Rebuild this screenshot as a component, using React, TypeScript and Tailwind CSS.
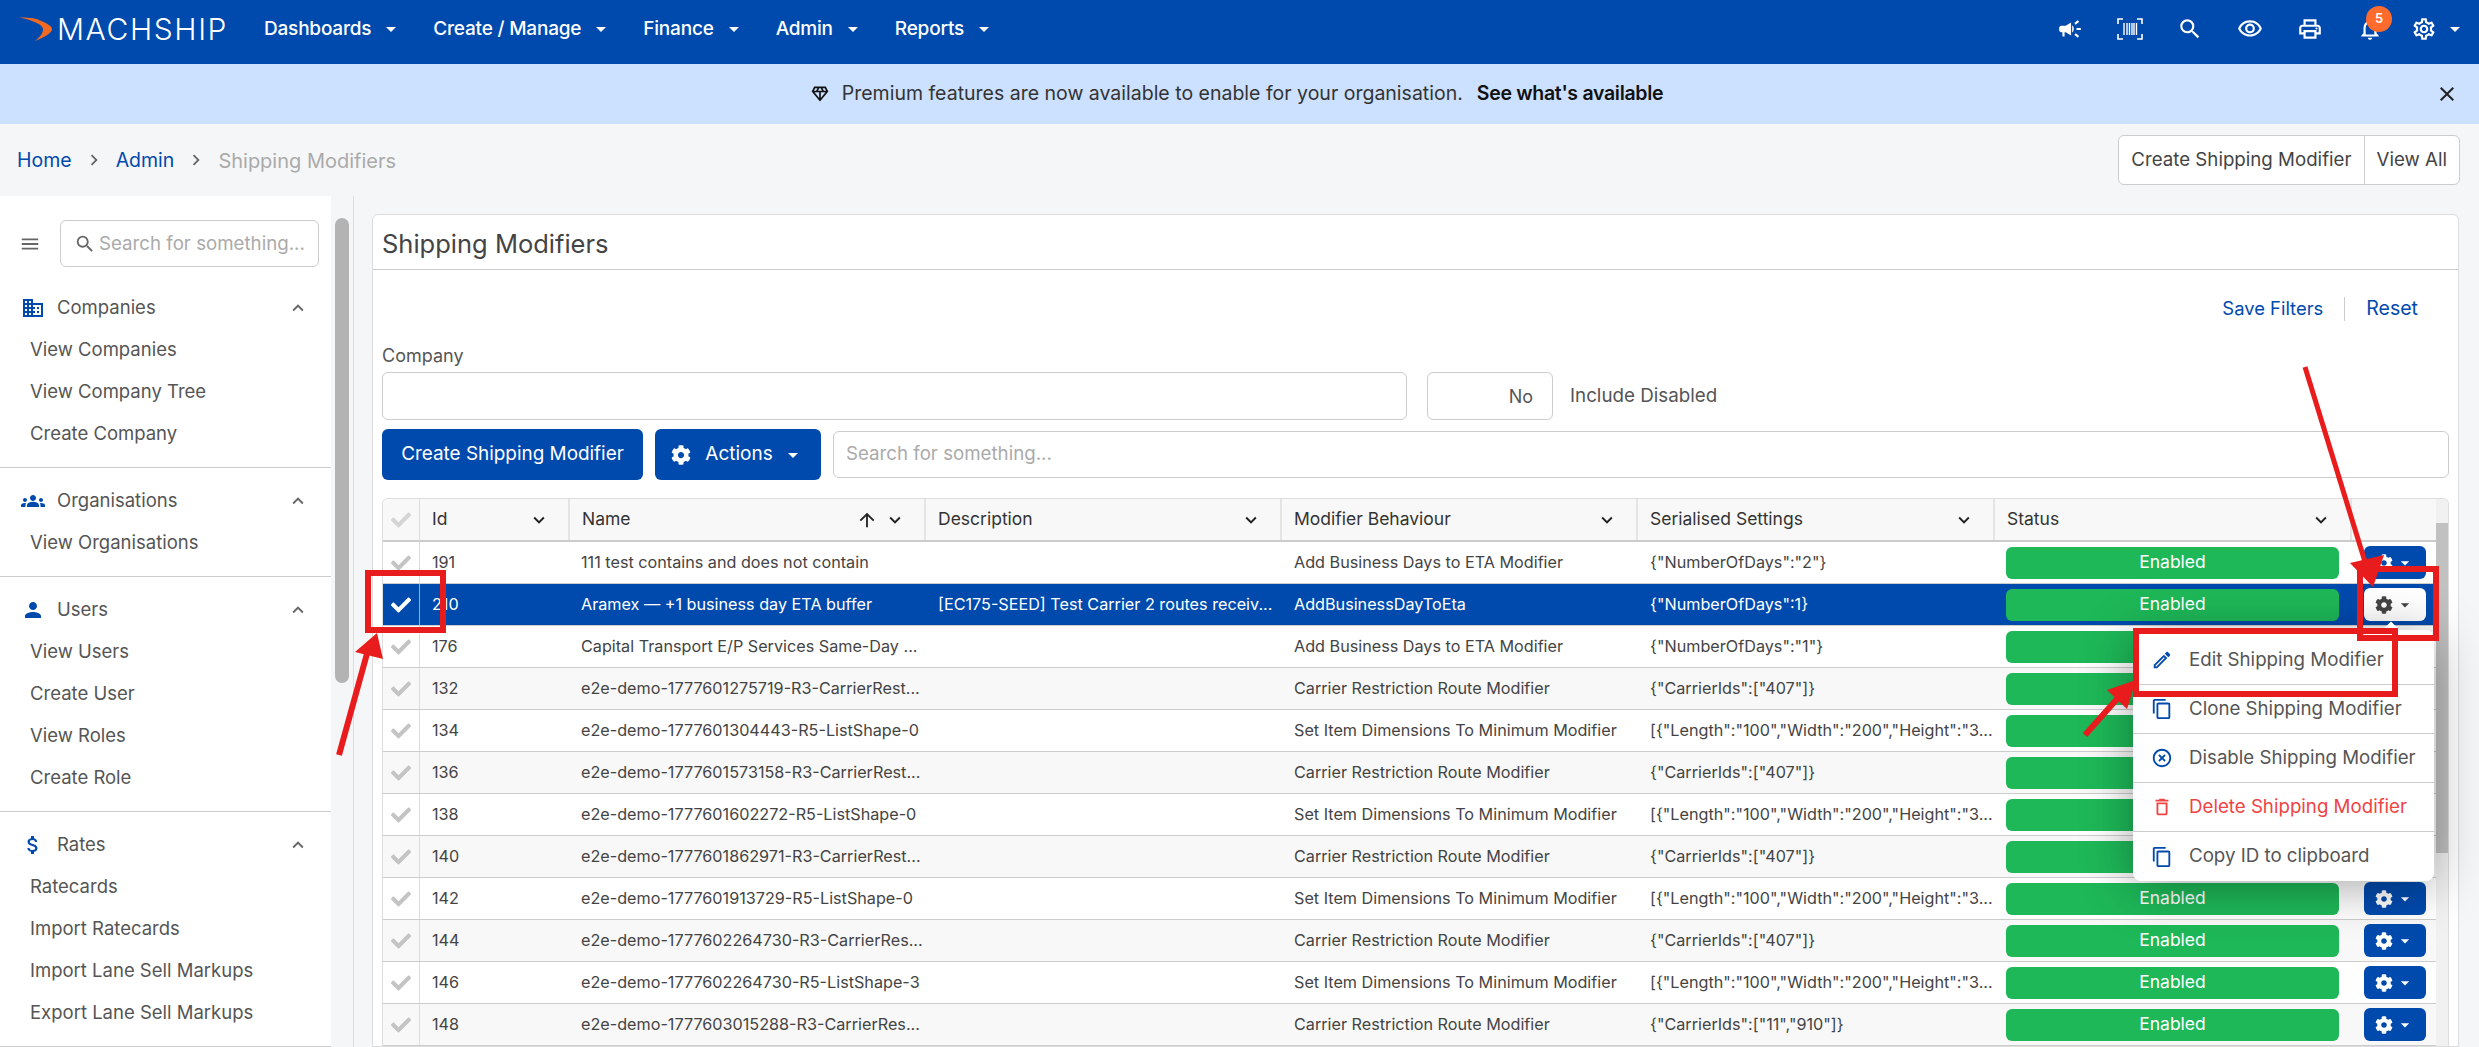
import React from 'react';
import { FaCheck, FaCog } from 'react-icons/fa';
import {
    MdArrowDropDown, MdArrowUpward, MdAttachMoney, MdCampaign, MdChevronRight, MdClose, MdDomain, MdExpandLess, MdExpandMore,
    MdGroups, MdHighlightOff, MdMenu, MdOutlineContentCopy, MdOutlineDelete, MdOutlineDiamond, MdOutlineEdit,
    MdOutlineNotifications, MdOutlinePrint, MdOutlineSettings, MdOutlineVisibility, MdPerson, MdSearch,
} from 'react-icons/md';

const navItems = ['Dashboards', 'Create / Manage', 'Finance', 'Admin', 'Reports'];

const sideGroups = [
    { title: 'Companies', icon: <MdDomain />, links: ['View Companies', 'View Company Tree', 'Create Company'] },
    { title: 'Organisations', icon: <MdGroups />, links: ['View Organisations'] },
    { title: 'Users', icon: <MdPerson />, links: ['View Users', 'Create User', 'View Roles', 'Create Role'] },
    { title: 'Rates', icon: <MdAttachMoney />, links: ['Ratecards', 'Import Ratecards', 'Import Lane Sell Markups', 'Export Lane Sell Markups'] },
];

const ETA = 'Add Business Days to ETA Modifier';
const CARRIER = 'Carrier Restriction Route Modifier';
const DIMS = 'Set Item Dimensions To Minimum Modifier';
const CARRIER_JSON = '{"CarrierIds":["407"]}';
const DIMS_JSON = '[{"Length":"100","Width":"200","Height":"3...';

const rows = [
    { id: '191', name: '111 test contains and does not contain', desc: '', mod: ETA, json: '{"NumberOfDays":"2"}' },
    { id: '210', name: 'Aramex — +1 business day ETA buffer', desc: '[EC175-SEED] Test Carrier 2 routes receiv...', mod: 'AddBusinessDayToEta', json: '{"NumberOfDays":1}', selected: true },
    { id: '176', name: 'Capital Transport E/P Services Same-Day ...', desc: '', mod: ETA, json: '{"NumberOfDays":"1"}' },
    { id: '132', name: 'e2e-demo-1777601275719-R3-CarrierRest...', desc: '', mod: CARRIER, json: CARRIER_JSON, alt: true },
    { id: '134', name: 'e2e-demo-1777601304443-R5-ListShape-0', desc: '', mod: DIMS, json: DIMS_JSON },
    { id: '136', name: 'e2e-demo-1777601573158-R3-CarrierRest...', desc: '', mod: CARRIER, json: CARRIER_JSON, alt: true },
    { id: '138', name: 'e2e-demo-1777601602272-R5-ListShape-0', desc: '', mod: DIMS, json: DIMS_JSON },
    { id: '140', name: 'e2e-demo-1777601862971-R3-CarrierRest...', desc: '', mod: CARRIER, json: CARRIER_JSON, alt: true },
    { id: '142', name: 'e2e-demo-1777601913729-R5-ListShape-0', desc: '', mod: DIMS, json: DIMS_JSON },
    { id: '144', name: 'e2e-demo-1777602264730-R3-CarrierRes...', desc: '', mod: CARRIER, json: CARRIER_JSON, alt: true },
    { id: '146', name: 'e2e-demo-1777602264730-R5-ListShape-3', desc: '', mod: DIMS, json: DIMS_JSON },
    { id: '148', name: 'e2e-demo-1777603015288-R3-CarrierRes...', desc: '', mod: CARRIER, json: '{"CarrierIds":["11","910"]}', alt: true },
];

const columns = 'grid grid-cols-[37px_150px_356px_356px_356px_357px_357px_87px]';

function Barcode() {
    return (
        <svg className="h-[22px] w-[26px]" viewBox="0 0 26 22" fill="none" stroke="currentColor" strokeWidth="1.6">
            <path d="M1 6V1h5M20 1h5v5M25 16v5h-5M6 21H1v-5" />
            <path d="M7 5v12M10 5v12M12.5 5v12M15 5v12M17 5v12M19.5 5v12" strokeWidth="1.4" />
        </svg>
    );
}

function TopBar() {
    return (
        <header className="flex h-16 shrink-0 items-center bg-[#004aad] pb-[6px] pl-[19px] pr-[12px] text-white">
            <div className="flex w-[245px] items-center">
                <svg className="mr-[5px] h-[24px] w-[33px] shrink-0" viewBox="0 0 33 24">
                    <path d="M0 0.5C8 0.5 16 1 20 3C30 7 33 10 33 12C33 16 26 20 16 24C22 19 24 16 24 12C24 8 14 3 0 0.5z" fill="#f26a21" />
                </svg>
                <span className="text-[30px] font-light leading-none tracking-[1.6px]">MACHSHIP</span>
            </div>
            <nav className="flex items-center">
                {navItems.map((item) => (
                    <div key={item} className="mr-[30px] flex items-center whitespace-nowrap text-[19px] font-medium tracking-[-0.2px]">
                        {item}
                        <MdArrowDropDown className="ml-[8px] text-[24px]" />
                    </div>
                ))}
            </nav>
            <div className="ml-auto flex items-center">
                <MdCampaign className="mr-[34px] text-[26px]" />
                <span className="mr-[34px]"><Barcode /></span>
                <MdSearch className="mr-[34px] text-[26px]" />
                <MdOutlineVisibility className="mr-[34px] text-[26px]" />
                <MdOutlinePrint className="mr-[34px] text-[26px]" />
                <div className="relative mr-[28px]">
                    <MdOutlineNotifications className="text-[26px]" />
                    <span className="absolute -right-[9px] -top-[10px] flex h-[26px] w-[26px] items-center justify-center rounded-full bg-[#ff6b2c] text-[13px] font-semibold">5</span>
                </div>
                <MdOutlineSettings className="text-[26px]" />
                <MdArrowDropDown className="ml-[6px] text-[24px]" />
            </div>
        </header>
    );
}

function Banner() {
    return (
        <div className="relative flex h-[60px] shrink-0 items-center justify-center bg-[#cce0ff] pr-[6px] text-[19.5px] text-[#333]">
            <MdOutlineDiamond className="mr-[12px] text-[20px] text-[#111]" />
            <span>Premium features are now available to enable for your organisation.</span>
            <span className="ml-[14px] font-semibold tracking-[-0.3px] text-[#111]">See what's available</span>
            <MdClose className="absolute right-[20px] top-[18px] text-[24px] text-[#222]" />
        </div>
    );
}

function Breadcrumbs() {
    return (
        <div className="flex h-[72px] shrink-0 items-center pl-[17px] pr-[19px] text-[19.5px]">
            <span className="pt-[2px] text-[#004aad]">Home</span>
            <MdChevronRight className="mx-[11px] text-[22px] text-[#666]" />
            <span className="pt-[2px] text-[#004aad]">Admin</span>
            <MdChevronRight className="mx-[11px] text-[22px] text-[#666]" />
            <span className="pt-[2px] text-[20px] text-[#aaa]">Shipping Modifiers</span>
            <div className="ml-auto flex h-[50px] items-center rounded-md border border-[#ccc] bg-white text-[18.7px] text-[#444]">
                <span className="border-r border-[#ccc] px-[12px] leading-[48px]">Create Shipping Modifier</span>
                <span className="px-[12px]">View All</span>
            </div>
        </div>
    );
}

function Sidebar() {
    return (
        <aside className="flex w-[372px] shrink-0 overflow-hidden">
            <div className="w-[331px] shrink-0 bg-white text-[#555]">
                <div className="flex items-center pb-[8px] pl-[19px] pr-[12px] pt-[24px]">
                    <MdMenu className="mr-[19px] text-[22px] text-[#666]" />
                    <div className="flex h-[47px] flex-1 items-center whitespace-nowrap rounded-md border border-[#ccc] pl-[13px] text-[18.7px] text-[#aaa]">
                        <MdSearch className="mr-[3px] text-[22px] text-[#666]" />
                        <span className="pt-[2px]">Search for something...</span>
                    </div>
                </div>
                {sideGroups.map((group) => (
                    <div key={group.title} className="border-b border-[#ccc] py-[12px]">
                        <div className="flex h-[42px] items-center pl-[21px] pr-[22px] text-[18.5px]">
                            <span className="flex w-[36px] text-[24px] text-[#004aad]">{group.icon}</span>
                            {group.title}
                            <MdExpandLess className="ml-auto text-[22px] text-[#666]" />
                        </div>
                        {group.links.map((link) => (
                            <div key={link} className="flex h-[42px] items-center pl-[30px] text-[18.5px]">{link}</div>
                        ))}
                    </div>
                ))}
            </div>
            <div className="ml-[4px] mt-[22px] h-[465px] w-[14px] rounded-full bg-[#b3b3b3]" />
            <div className="ml-[4px] w-px bg-[#ddd]" />
        </aside>
    );
}

function Row({ row }: { row: (typeof rows)[number] }) {
    const bg = row.selected ? 'bg-[#004aad] text-white' : row.alt ? 'bg-[#f8f8f8] text-[#444]' : 'bg-white text-[#444]';
    return (
        <div className={`${columns} h-[42px] items-center border-b border-[#ccc] text-[16.2px] ${bg}`}>
            <div className={`flex h-full items-center justify-center border-r ${row.selected ? 'border-[#8fb0dd]' : 'border-[#ddd]'}`}>
                <FaCheck className={row.selected ? 'text-[20px] text-white' : 'text-[20px] text-[#c4c4c4]'} />
            </div>
            <div className="pl-[12px]">{row.id}</div>
            <div className="whitespace-nowrap pl-[11px]">{row.name}</div>
            <div className="whitespace-nowrap pl-[12px]">{row.desc}</div>
            <div className="whitespace-nowrap pl-[12px]">{row.mod}</div>
            <div className="whitespace-nowrap pl-[12px]">{row.json}</div>
            <div className="pl-[11px] pr-[13px]">
                <div className="flex h-[32px] items-center justify-center rounded-md bg-[#1eb858] text-[17.5px] text-white">Enabled</div>
            </div>
            <div className="pl-[12px]">
                <div className={`flex h-[33px] w-[62px] items-center justify-center rounded-md ${row.selected ? 'bg-white text-[#444]' : 'bg-[#004aad] text-white'}`}>
                    <FaCog className="text-[18px]" />
                    <MdArrowDropDown className="ml-[2px] text-[20px]" />
                </div>
            </div>
        </div>
    );
}

function HeadCell({ label, sorted }: { label: string; sorted?: boolean }) {
    return (
        <div className="flex h-full items-center border-r-2 border-[#e4e4e4] pl-[12px] pr-[18px]">
            {label}
            {sorted && <MdArrowUpward className="ml-auto text-[22px] text-[#222]" />}
            <MdExpandMore className={`${sorted ? 'ml-[6px]' : 'ml-auto'} text-[22px] text-[#222]`} />
        </div>
    );
}

function ActionMenu() {
    const items = [
        { label: 'Edit Shipping Modifier', icon: <MdOutlineEdit /> },
        { label: 'Clone Shipping Modifier', icon: <MdOutlineContentCopy /> },
        { label: 'Disable Shipping Modifier', icon: <MdHighlightOff /> },
        { label: 'Delete Shipping Modifier', icon: <MdOutlineDelete />, danger: true },
        { label: 'Copy ID to clipboard', icon: <MdOutlineContentCopy /> },
    ];
    return (
        <div className="absolute left-[2133px] top-[630px] z-10 w-[301px] rounded-lg bg-white pt-[6px] shadow-[0_6px_50px_rgba(0,0,0,0.35)]">
            <div className="absolute -top-[6px] left-[252px] h-[12px] w-[12px] rotate-45 bg-white" />
            {items.map((item) => (
                <div key={item.label} className={`flex h-[49px] items-center whitespace-nowrap border-b border-[#ccc] pl-[18px] text-[18.7px] last:border-b-0 ${item.danger ? 'text-[#ef4444]' : 'text-[#555]'}`}>
                    <span className={`mr-[16px] flex text-[22px] ${item.danger ? 'text-[#ef4444]' : 'text-[#004aad]'}`}>{item.icon}</span>
                    {item.label}
                </div>
            ))}
        </div>
    );
}

function Annotations() {
    return (
        <svg className="pointer-events-none absolute left-0 top-0 z-20 h-[1047px] w-[2479px]" viewBox="0 0 2479 1047">
            <g fill="none" stroke="#e81c1c" strokeWidth="6">
                <rect x="368" y="573" width="75" height="57" />
                <rect x="2360" y="569" width="76" height="69" />
                <rect x="2136" y="631" width="259" height="63" />
            </g>
            <g stroke="#e81c1c" strokeWidth="6" fill="#e81c1c">
                <path d="M339 755L368 650" fill="none" />
                <path d="M377 633L355 652L383 659z" stroke="none" />
                <path d="M2305 367L2366 565" fill="none" strokeWidth="5" />
                <path d="M2373 587L2350 563L2384 555z" stroke="none" />
                <path d="M2085 735L2125 690" fill="none" />
                <path d="M2136 680L2107 690L2127 709z" stroke="none" />
            </g>
        </svg>
    );
}

export default function App() {
    return (
        <div className="relative flex h-[1047px] w-[2479px] flex-col overflow-hidden bg-[#f5f6f8] font-['Inter',sans-serif]">
            <TopBar />
            <Banner />
            <Breadcrumbs />
            <div className="flex min-h-0 flex-1">
                <Sidebar />
                <main className="mt-[18px] w-[2087px] rounded-t-md border border-[#ddd] bg-white">
                    <div className="flex h-[55px] items-center border-b border-[#ccc] pl-[9px] pt-[5px] text-[25.5px] text-[#444]">Shipping Modifiers</div>
                    <div className="flex h-[75px] items-center justify-end pr-[40px] pt-[3px] text-[18.4px] text-[#004aad]">
                        <span>Save Filters</span>
                        <span className="mx-[21px] h-[24px] w-px bg-[#ccc]" />
                        <span className="text-[19.5px]">Reset</span>
                    </div>
                    <div className="px-[9px]">
                        <div className="h-[22px] text-[18px] leading-[22px] text-[#555]">Company</div>
                        <div className="mt-[5px] flex items-center">
                            <div className="h-[48px] w-[1025px] rounded-md border border-[#ccc]" />
                            <div className="ml-[20px] flex h-[48px] w-[126px] items-center justify-end rounded-md border border-[#ccc] pr-[19px] text-[18px] text-[#555]">No</div>
                            <span className="ml-[17px] text-[18.8px] text-[#555]">Include Disabled</span>
                        </div>
                        <div className="mt-[9px] flex items-center">
                            <div className="flex h-[51px] w-[261px] items-center justify-center rounded-md bg-[#004aad] text-[18.9px] text-white">Create Shipping Modifier</div>
                            <div className="ml-[12px] flex h-[51px] w-[166px] items-center justify-center rounded-md bg-[#004aad] text-[19px] text-white">
                                <FaCog className="mr-[14px] text-[20px]" />
                                Actions
                                <MdArrowDropDown className="ml-[8px] text-[24px]" />
                            </div>
                            <div className="ml-[12px] flex h-[47px] flex-1 items-center rounded-md border border-[#ccc] pl-[12px] text-[18.7px] text-[#aaa]">Search for something...</div>
                        </div>
                        <div className="mt-[18px] h-[600px] overflow-hidden rounded-t-md border border-b-0 border-[#ddd]">
                            <div className="flex">
                                <div className="min-w-0 flex-1 overflow-hidden">
                                    <div className={`${columns} h-[43px] items-center border-b-2 border-[#ccc] bg-[#f8f8f8] text-[17.5px] text-[#333]`}>
                                        <div className="flex h-full items-center justify-center border-r border-[#ddd]"><FaCheck className="text-[20px] text-[#d4d4d4]" /></div>
                                        <HeadCell label="Id" />
                                        <HeadCell label="Name" sorted />
                                        <HeadCell label="Description" />
                                        <HeadCell label="Modifier Behaviour" />
                                        <HeadCell label="Serialised Settings" />
                                        <HeadCell label="Status" />
                                        <div />
                                    </div>
                                    {rows.map((row) => <Row key={row.id} row={row} />)}
                                </div>
                                <div className="w-[12px] shrink-0 bg-[#f1f1f1] pt-[24px]">
                                    <div className="h-[330px] bg-[#c1c1c1]" />
                                </div>
                            </div>
                        </div>
                    </div>
                </main>
            </div>
            <ActionMenu />
            <Annotations />
        </div>
    );
}
